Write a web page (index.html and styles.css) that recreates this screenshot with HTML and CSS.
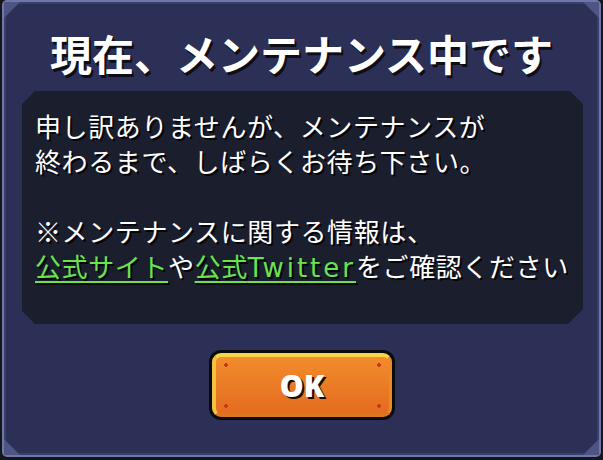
FILE: index.html
```html
<!DOCTYPE html>
<html lang="ja">
<head>
  <meta charset="UTF-8" />
  <title>メンテナンス</title>
  <meta name="viewport" content="width=device-width, initial-scale=1.0" />
  <link rel="stylesheet" href="styles.css">
</head>
<body>
  <div class="panel">
    <span class="corner tl"></span>
    <span class="corner tr"></span>
    <span class="corner bl"></span>
    <span class="corner br"></span>

    <h1 class="title">現在、メンテナンス中です</h1>

    <div class="message">
      <p>申し訳ありませんが、メンテナンスが<br>終わるまで、しばらくお待ち下さい。</p>
      <p>※メンテナンスに関する情報は、<br><a href="#">公式サイト</a>や<a href="#">公式<span class="latin">Twitter</span></a>をご確認ください</p>
    </div>

    <div class="actions">
      <button class="ok"><span class="ok-face">OK</span></button>
    </div>
  </div>
</body>
</html>
```

FILE: styles.css
```css
body {
  margin: 0;
  background-color: #15161c;
  font-family: "Noto Sans CJK JP", "Noto Sans", sans-serif;
  color: #fff;
}

.panel {
  position: relative;
  box-sizing: border-box;
  height: 457px;
  margin: 0 2px;
  padding-top: 25px;
  background-color: #2c3056;
  border: 2px solid #6f76aa;
  border-radius: 5px;
  box-shadow: inset 0 0 0 2px #3a3f68;
}

.corner {
  position: absolute;
  width: 0;
  height: 0;
  border-style: solid;
}
.corner.tl { top: 0; left: 0; border-width: 16px 16px 0 0; border-color: #4f5582 transparent transparent transparent; }
.corner.tr { top: 0; right: 0; border-width: 0 16px 16px 0; border-color: transparent #4f5582 transparent transparent; }
.corner.bl { bottom: 0; left: 0; border-width: 16px 0 0 16px; border-color: transparent transparent transparent #4f5582; }
.corner.br { bottom: 0; right: 0; border-width: 0 0 16px 16px; border-color: transparent transparent #4f5582 transparent; }

.title {
  margin: 0 0 12px;
  font-size: 42px;
  line-height: 52px;
  font-weight: 600;
  text-align: center;
  text-shadow: 2px 3px 0 #0d0e18, 1px 1px 0 #0d0e18;
}

.message {
  margin: 0 16px 0 18px;
  padding: 17px 6px 38px 13px;
  background-color: #1b1e2d;
  clip-path: polygon(13px 0, calc(100% - 13px) 0, 100% 13px, 100% calc(100% - 15px), calc(100% - 15px) 100%, 13px 100%, 0 calc(100% - 13px), 0 13px);
  font-size: 26px;
  line-height: 35px;
  letter-spacing: 0.6px;
  white-space: nowrap;
  text-shadow: 2px 2px 0 #050608;
}

.message p {
  margin: 0 0 35px;
}
.message p:last-child {
  margin-bottom: 0;
}

.message a {
  color: #6ae34f;
  text-decoration: underline;
  text-decoration-thickness: 2px;
  text-underline-offset: 4px;
}

.latin {
  font-family: "DejaVu Sans", sans-serif;
  letter-spacing: 3px;
}

.actions {
  display: flex;
  justify-content: center;
  margin-top: 26px;
}

.ok {
  width: 186px;
  height: 70px;
  padding: 3px;
  border: none;
  border-radius: 12px;
  background-color: #0b0b0e;
  cursor: pointer;
}

.ok-face {
  position: relative;
  display: flex;
  align-items: center;
  justify-content: center;
  box-sizing: border-box;
  height: 100%;
  border-radius: 9px;
  border-top: 4px solid #f6d548;
  border-left: 4px solid #f3c23f;
  border-right: 3px solid #e88a2c;
  border-bottom: 3px solid #d9781f;
  background: linear-gradient(#f28c2c, #e46b1f);
  color: #fff;
  font-family: "Open Sans", "DejaVu Sans", sans-serif;
  font-size: 30px;
  font-weight: 800;
  text-shadow: 2px 2px 0 #1a0c05;
}

.ok-face::before,
.ok-face::after {
  content: "";
  position: absolute;
  left: 8px;
  right: 8px;
  height: 4px;
  background:
    radial-gradient(circle, #c9361c 1.6px, transparent 2px) left center / 4px 4px no-repeat,
    radial-gradient(circle, #c9361c 1.6px, transparent 2px) right center / 4px 4px no-repeat;
}
.ok-face::before { top: 6px; }
.ok-face::after { bottom: 6px; }
```
